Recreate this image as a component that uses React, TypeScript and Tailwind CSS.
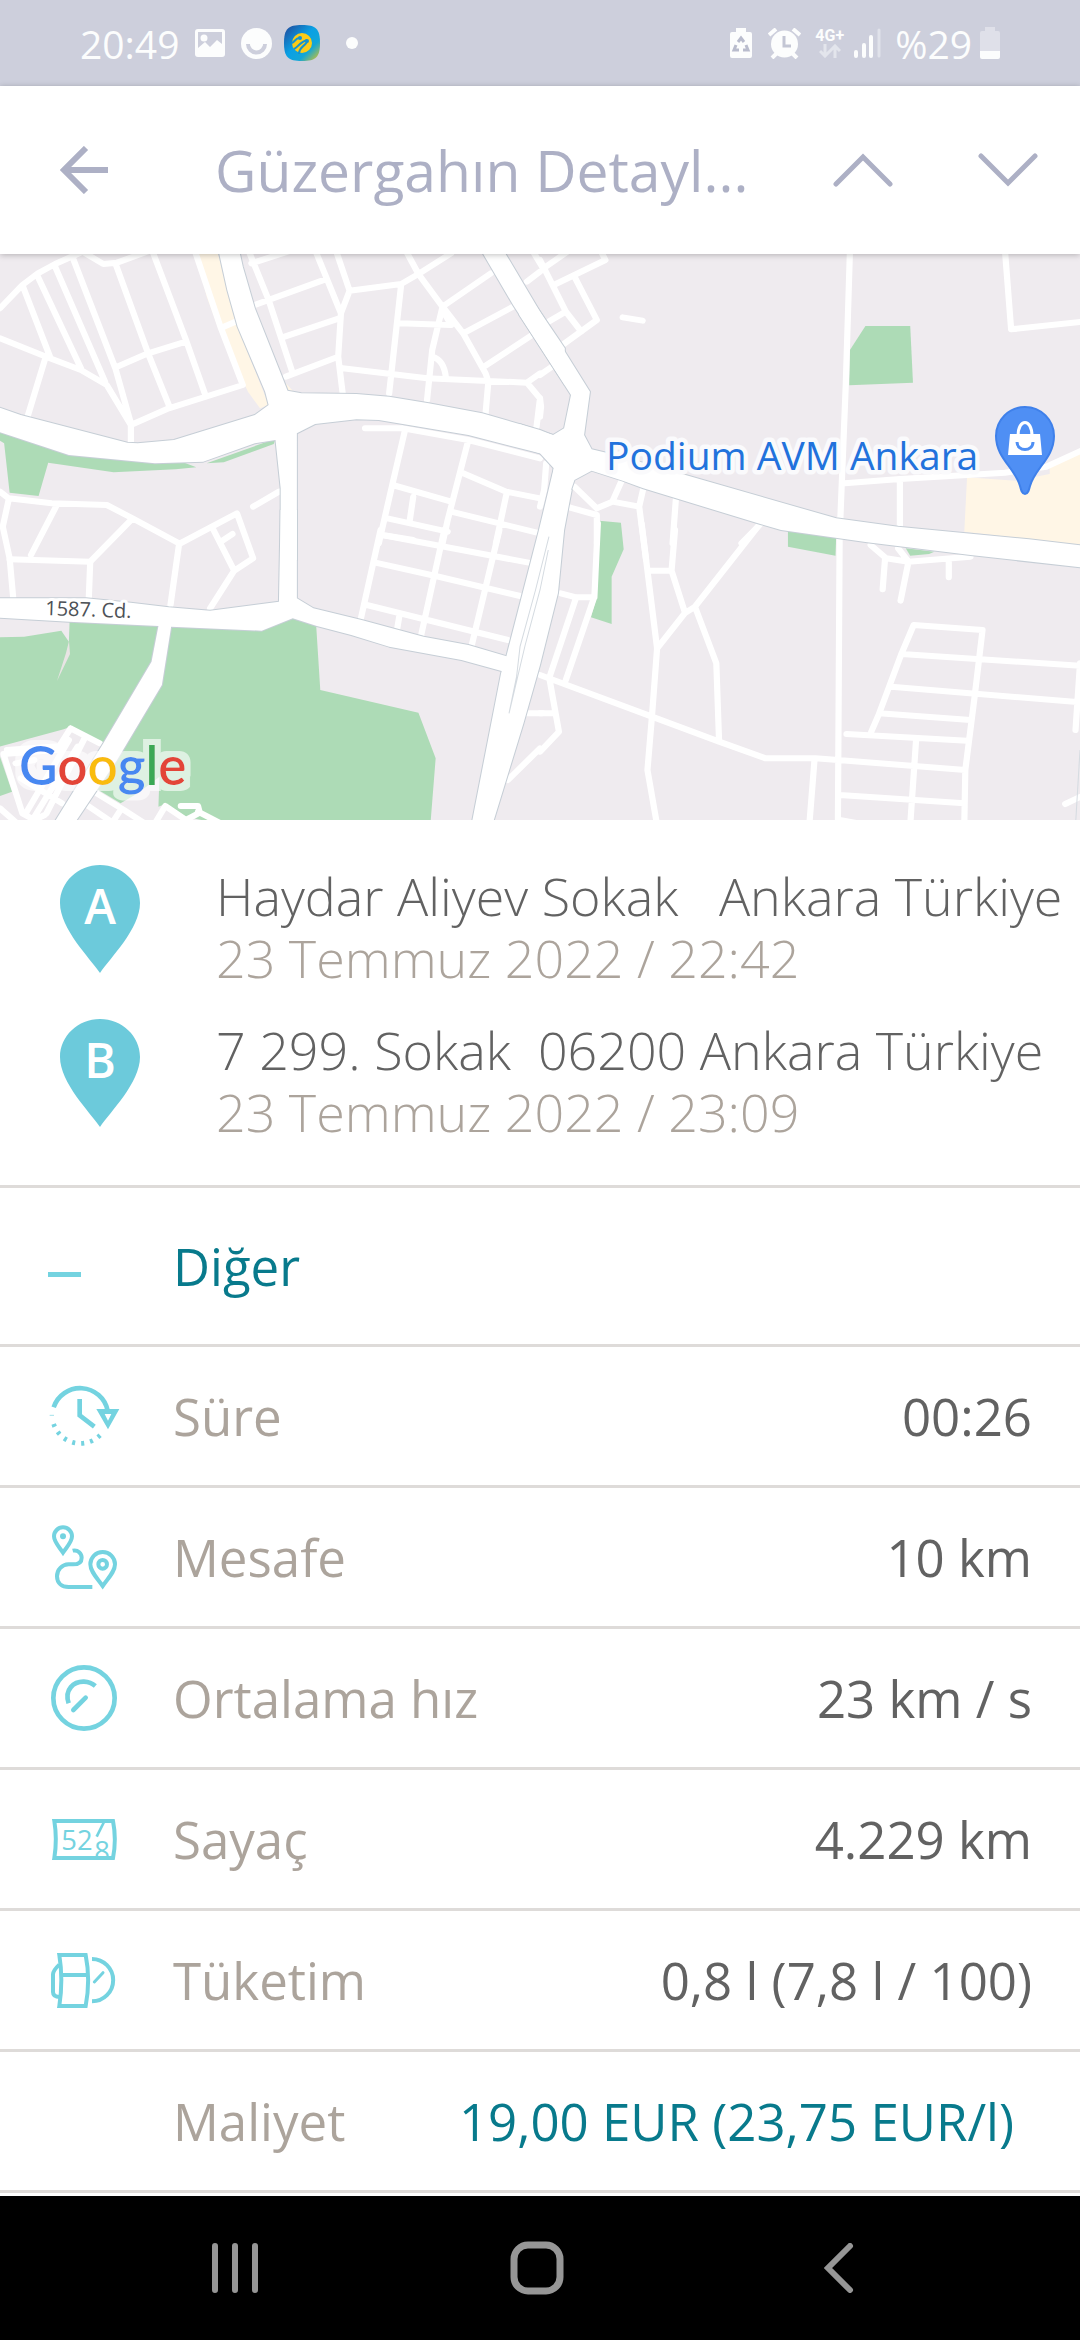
import type { ReactNode } from "react";

/* ---------- Map data: four tiles, each in its own 1568 x 870 space ---------- */

type Tile = {
  x: number;
  y: number;
  green: string[];
  yellow: string[];
  minor: string;
  major: string[];
  cuts?: string;
};

const tiles: Tile[] = [
  {
    x: 0,
    y: -4,
    green: [
      "-20,540 200,615 450,640 520,632 570,652 510,658 330,667 140,638 112,738 28,728 12,580 -20,560",
      "600,640 800,566 795,582 650,637",
    ],
    yellow: ["570,0 630,0 690,230 780,465 755,475 720,425 640,250 600,140", "830,400 850,422 830,424"],
    minor:
      "M0 175L65 105L110 70L160 42L240 5L300 42L340 38L440 0M65 105L145 320M110 80L235 355M160 50L305 395M212 25L335 355L380 520M335 40L430 310L492 470M445 10L540 270L598 440M565 0L640 230L705 405L490 475L380 525V580M340 350L430 310L540 275M650 230L690 212M0 265L145 325L235 360L310 405L380 525M130 330L80 500M725 10L780 150L850 370M730 40L850 0M740 165L945 88M915 0L990 190M975 0L1015 122L990 190L982 320L995 430M820 262L985 205M830 380L982 320M1015 122L1165 102L1215 72L1310 10M1165 102L1130 430M1180 5L1215 72L1285 170L1345 250L1410 370L1415 385M1285 170L1425 70M1285 170L1255 300L1240 450M1160 220L1310 225L1285 180M1345 250L1490 170M1405 350L1545 255M1255 320Q1290 330 1295 385M995 355L1240 385L1530 398L1568 370M1530 398L1568 445L1558 530M1418 395L1410 490M1530 95L1568 65M1545 0L1580 60M1060 535H1170L1360 570L1568 625M1175 545L1140 700L1100 880M1360 570L1300 810L1285 880M1140 705L1310 755M1345 670L1470 725L1568 745M1310 785L1568 850M1470 735L1440 880M1200 740L1190 810M1125 805L1300 845M1110 855L1200 870M0 725L25 745L150 760L310 765L385 805L520 880M25 750L8 830L28 925L38 1040M165 765L90 915M385 805L260 937M735 770L810 725M520 882L688 790L735 925L680 962L610 1075M620 840L680 962M640 876L675 852M520 882L495 1065",
    major: [
      "-20,466 60,495 370,578 400,580 505,570 740,495 780,465 770,425 690,230 660,120 630,-20 690,-20 705,50 740,175 835,422 875,430 1035,432 1130,440 1245,460 1400,490 1568,540 1640,570 1640,632 1568,610 1360,555 1100,510 1035,508 915,522 862,550 862,930 815,930 815,715 800,570 740,580 590,635 450,640 200,615 -20,540",
      "1385,-20 1490,165 1568,290 1640,405 1640,295 1568,185 1450,-20",
    ],
  },
  {
    x: 540,
    y: -4,
    green: [
      "945,228 1075,228 1083,398 898,406 900,300",
      "172,812 235,818 243,898 208,980 208,1122 148,1102 165,1040",
      "720,838 860,860 858,917 720,890",
    ],
    yellow: ["1240,682 1380,692 1480,672 1480,640 1580,600 1580,890 1420,868 1232,845"],
    minor:
      "M0 30L75 185L120 245M10 55L80 5M40 105L190 30L175 0M100 80L165 210L65 285M25 215L75 185M0 375L35 350M240 202L298 212M900 0L888 400L870 860M1350 0L1368 238L1580 215M885 700L1045 687L1350 668L1470 650L1580 598M1045 690V835M395 740L385 880M300 715L288 770L308 930M238 690L210 755M100 710L165 775L210 755L288 770M85 772L165 795V880M640 822L585 880M0 445L3 470L0 500M18 640L12 720L0 770",
    major: [
      "-60,95 0,185 145,425 128,555 150,598 220,615 400,668 860,805 1040,830 1420,868 1600,890 1600,956 1568,952 1250,915 950,877 700,840 640,822 300,715 240,692 150,662 100,690 70,780 20,780 40,655 0,610 -60,590 -60,522 0,543 38,555 70,535 90,435 0,290 -60,195",
    ],
  },
  {
    x: 0,
    y: 276,
    green: [
      "-20,322 70,320 178,302 200,335 202,275 500,288 760,302 850,262 918,285 930,480 1215,548 1265,685 1250,880 630,880 540,860 480,822 460,830 463,740 400,790 350,820 270,770 300,640 205,590 185,598 -20,655",
      "-20,660 0,680 35,785 -20,805",
    ],
    yellow: [],
    minor:
      "M28 88L262 95L258 200M205 595L290 640M205 595L165 660L10 672L65 850L100 870L130 855M248 620L135 850M75 850L200 630M45 700L100 690M100 860L225 650M20 660L180 648M60 745L180 820M0 835L55 885M265 780L360 840L420 880M245 820L330 880M325 880L350 840M450 880L480 828L540 870L580 848L575 828H525M575 845L650 885M1290 0L1222 320M1450 0L1370 345M1105 0L1048 265M1110 15L1535 98M1090 98L1265 138L1510 198M1065 225L1475 330M1160 255L1152 305M1475 750L1568 655M1525 550H1575",
    major: [
      "-20,205 250,205 380,218 490,232 610,242 810,215 815,-60 862,-60 862,205 910,235 1050,270 1230,320 1360,345 1500,388 1480,430 1340,390 1130,350 1020,315 920,288 850,265 760,302 497,290 470,465 340,690 210,890 150,890 300,640 440,395 460,288 200,275 -20,262",
      "1608,-185 1565,0 1470,380 1455,430 1368,890 1428,890 1520,580 1568,405 1620,190 1638,0 1660,-120",
    ],
    cuts: "M1594 20L1555 180L1510 350L1500 440L1478 550M1592 60L1568 180L1525 345L1478 550",
  },
  {
    x: 540,
    y: 276,
    green: ["1062,55 1145,65 1130,72 1075,77"],
    yellow: [],
    minor:
      "M168 -20L158 200L75 450M60 190L105 202H158M105 202L28 440M0 435L325 560L520 635L655 685H800L865 690L1235 720M28 450L55 605L0 665M0 550H40M295 -20L340 355L325 560L312 720L340 885M392 0L382 122L420 245M315 122H382M640 -20L450 230L420 250L340 355M450 230L512 400L520 635M870 20L865 885M797 690L782 885M960 45L1005 85L1070 95L1250 80M1040 55L1070 95L1047 212M1002 85L995 178M1187 90V142M962 605L985 550L1050 370L1085 285L1285 300L1262 500L1235 720L1232 885M1050 372L1580 408M1020 470L1580 518M985 550L1250 570M890 612L1240 632M1092 630L1075 885M870 795L1232 820M1525 822L1570 800M1568 400L1555 600M870 870L950 885",
    major: [],
    cuts: "M1568 660L1555 885",
  },
];

function Layer({ draw }: { draw: (t: Tile) => ReactNode }) {
  return (
    <>
      {tiles.map((t) => (
        <g key={`${t.x}-${t.y}`} transform={`translate(${t.x} ${t.y}) scale(0.34439 0.33333)`}>
          {draw(t)}
        </g>
      ))}
    </>
  );
}

function RouteMap() {
  return (
    <svg viewBox="0 0 1080 566" preserveAspectRatio="xMidYMid slice" className="block h-[566px] w-full bg-[#efebef]" role="img" aria-label="Harita">
      <defs>
        <filter id="halo" x="-10%" y="-30%" width="120%" height="160%">
          <feMorphology in="SourceAlpha" operator="dilate" radius="6" result="grown" />
          <feFlood floodColor="#fff" floodOpacity="0.6" />
          <feComposite in2="grown" operator="in" result="ring" />
          <feMerge>
            <feMergeNode in="ring" />
            <feMergeNode in="SourceGraphic" />
          </feMerge>
        </filter>
      </defs>

      <Layer
        draw={(t) => (
          <>
            {t.yellow.map((p) => <polygon key={p} points={p} fill="#fff6e6" />)}
            {t.green.map((p) => <polygon key={p} points={p} fill="#addbb6" />)}
          </>
        )}
      />
      <path d="M69 387L70 400L57 427L66 399Z" fill="#e8e4e4" />
      <Layer draw={(t) => <path d={t.minor} fill="none" stroke="#fff" strokeWidth="18" strokeLinejoin="round" strokeLinecap="round" />} />
      <Layer draw={(t) => t.major.map((p) => <polygon key={p} points={p} fill="none" stroke="#c6ced6" strokeWidth="6" strokeLinejoin="round" />)} />
      <Layer draw={(t) => t.major.map((p) => <polygon key={p} points={p} fill="#fff" />)} />
      <Layer draw={(t) => t.cuts && <path d={t.cuts} fill="none" stroke="#d5dbe1" strokeWidth="3" />} />

      <g fontFamily="'Open Sans', sans-serif" strokeLinejoin="round" className="[paint-order:stroke]">
        <text x="45" y="361" fontSize="20" fill="#4d5156" stroke="#fff" strokeWidth="6" transform="rotate(2 45 361)">1587. Cd.</text>
        <text x="606" y="216" fontSize="39" fill="#2272dc" stroke="#fafafc" strokeWidth="9">Podium AVM Ankara</text>
      </g>

      <path d="M1025 240C1022 240 1021 236 1020 232C1015 214 996 204 996 182A29 29 0 0 1 1054 182C1054 204 1035 214 1030 232C1029 236 1028 240 1025 240Z" fill="#4f8ff4" stroke="#3f80ea" strokeWidth="2" />
      <path d="M1010 180H1040L1042 201H1008Z" fill="#fff" />
      <path d="M1018 182C1018 164 1032 164 1032 182" fill="none" stroke="#fff" strokeWidth="3" />
      <path d="M1017 188C1017 198 1033 198 1033 188" fill="none" stroke="#4f8ff4" strokeWidth="3" />

      <text x="19" y="531" fontSize="53" fontFamily="Lato, sans-serif" fontWeight="600" filter="url(#halo)">
        <tspan fill="#4688f1">G</tspan>
        <tspan fill="#e34537">o</tspan>
        <tspan fill="#f9bc0d">o</tspan>
        <tspan fill="#4688f1">g</tspan>
        <tspan fill="#3aa955">l</tspan>
        <tspan fill="#e34537">e</tspan>
      </text>
    </svg>
  );
}

/* ---------- Status bar ---------- */

function StatusBar() {
  return (
    <div className="flex h-[86px] items-center bg-[#cdcfdc] px-20 text-[39px] leading-none text-[#fcfdfd]">
      <span>20:49</span>
      <svg viewBox="0 0 30 30" className="ml-4 h-[30px] w-[30px]">
        <path fillRule="evenodd" fill="currentColor" d="M3 1H27Q30 1 30 4V26Q30 29 27 29H3Q0 29 0 26V4Q0 1 3 1ZM3 4V20L10 14L15 19L22 12L27 16V4ZM9 6.500a3.500 3.500 0 1 1 0 7a3.500 3.500 0 0 1 0-7Z" />
      </svg>
      <svg viewBox="0 0 31 31" className="ml-4 h-[31px] w-[31px]">
        <circle cx="15.500" cy="15.500" r="15.500" fill="currentColor" />
        <path d="M7 16A8.500 8.500 0 0 0 24 16" fill="none" stroke="#cdcfdc" strokeWidth="4" />
        <path d="M9 15H22A6.500 6.500 0 0 1 9 15Z" fill="currentColor" />
      </svg>
      <svg viewBox="0 0 36 36" className="ml-3 h-9 w-9">
        <defs>
          <linearGradient id="app" x1="0" y1="0" x2="1" y2="1">
            <stop offset="0.050" stopColor="#1f4fa0" />
            <stop offset="0.450" stopColor="#0aa0e4" />
            <stop offset="0.700" stopColor="#12a6d8" />
            <stop offset="0.950" stopColor="#c8c034" />
          </linearGradient>
        </defs>
        <path d="M18 0C32 0 36 4 36 18S32 36 18 36S0 32 0 18S4 0 18 0Z" fill="url(#app)" />
        <circle cx="18" cy="18" r="10" fill="#fccb16" />
        <path d="M8 18C11 17 12 12 16 13M10 24C13 23 16 17 23 15M15 29C15 22 20 22 23 17" fill="none" stroke="#1593cf" strokeWidth="2" />
        <circle cx="16" cy="13" r="2" fill="#1593cf" />
        <circle cx="23" cy="16" r="2" fill="#1593cf" />
      </svg>
      <span className="ml-[26px] h-3 w-3 rounded-full bg-current" />

      <svg viewBox="0 0 22 30" className="ml-auto h-[30px] w-[22px]">
        <path d="M6 0H16V4H20Q22 4 22 6V28Q22 30 20 30H2Q0 30 0 28V6Q0 4 2 4H6Z" fill="currentColor" />
        <path d="M8 14L11 10L14 14M16 17L18 22H13M9 22H4L6 17" fill="none" stroke="#b9bccd" strokeWidth="3" />
      </svg>
      <svg viewBox="0 0 33 31" className="ml-4 h-[31px] w-[33px]">
        <circle cx="16.500" cy="16" r="13.500" fill="currentColor" />
        <path d="M1 7L8 1M25 1L32 7M4 30L9 25M29 30L24 25" stroke="currentColor" strokeWidth="4" />
        <path d="M16 8V18H23" fill="none" stroke="#c3c6d4" strokeWidth="3" />
      </svg>
      <span className="ml-[14px] flex flex-col items-center">
        <span className="font-['Roboto'] text-[16px] leading-[16px] font-bold">4G+</span>
        <svg viewBox="0 0 22 14" className="h-[14px] w-[22px] text-[#e3e5ec]">
          <path d="M6 0V12M1 7L6 12L11 7M16 14V2M11 7L16 2L21 7" fill="none" stroke="currentColor" strokeWidth="3" />
        </svg>
      </span>
      <svg viewBox="0 0 27 30" className="ml-[10px] h-[30px] w-[27px]">
        <path d="M2 24V28M10 17V28M17 9V28" stroke="currentColor" strokeWidth="4" strokeLinecap="round" />
        <path d="M25 2V28" stroke="#e0e2ea" strokeWidth="3" strokeLinecap="round" />
      </svg>
      <span className="ml-[14px]">%29</span>
      <svg viewBox="0 0 20 32" className="ml-2 h-8 w-5">
        <path d="M5 0H15V4H18Q20 4 20 6V24H0V6Q0 4 2 4H5Z" fill="#dfe0e9" />
        <path d="M0 24H20V30Q20 32 18 32H2Q0 32 0 30Z" fill="currentColor" />
      </svg>
    </div>
  );
}

/* ---------- Header ---------- */

function Header() {
  return (
    <header className="relative z-10 flex h-[168px] items-center bg-white pr-[42px] pl-[60px] text-[#adb0c5] shadow-[0_1px_6px_rgba(0,0,0,0.25)]">
      <button type="button" aria-label="Geri">
        <svg viewBox="0 0 48 48" className="block h-12 w-12">
          <path d="M26 2L4 24L26 46M4 24H48" fill="none" stroke="currentColor" strokeWidth="6" />
        </svg>
      </button>
      <h1 className="ml-[107px] flex-1 text-[57px] leading-none whitespace-nowrap">Güzergahın Detayl...</h1>
      <button type="button" aria-label="Önceki">
        <svg viewBox="0 0 60 34" className="block h-[34px] w-[60px]">
          <path d="M3 31L30 4L57 31" fill="none" stroke="currentColor" strokeWidth="5" strokeLinecap="round" />
        </svg>
      </button>
      <button type="button" aria-label="Sonraki" className="ml-[85px]">
        <svg viewBox="0 0 60 34" className="block h-[34px] w-[60px]">
          <path d="M3 3L30 30L57 3" fill="none" stroke="currentColor" strokeWidth="5" strokeLinecap="round" />
        </svg>
      </button>
    </header>
  );
}

/* ---------- Stops ---------- */

function Stop({ mark, address, time }: { mark: string; address: string; time: string }) {
  return (
    <li className="flex gap-[76px]">
      <svg viewBox="0 0 80 108" className="h-[108px] w-20 shrink-0">
        <path d="M40 108C30 93 0 64 0 38C0 17 18 0 40 0S80 17 80 38C80 64 50 93 40 108Z" fill="#6ccadb" />
        <text x="40" y="59" textAnchor="middle" fontSize="48" fontWeight="600" fill="#fff">{mark}</text>
      </svg>
      <div className="text-[52px] leading-[62px] font-light whitespace-pre">
        <p className="text-[#626262]">{address}</p>
        <p className="text-[#aca49c]">{time}</p>
      </div>
    </li>
  );
}

/* ---------- Detail rows ---------- */

const icons = {
  clock: (
    <svg viewBox="144 600 216 216" className="h-[72px] w-[72px]" fill="none" stroke="currentColor" strokeWidth="14">
      <path d="M161 682A84 84 0 0 1 323 692M239 657V706L283 740" />
      <path d="M161 732A84 84 0 0 0 301 765" strokeDasharray="9 18" />
      <path d="M149 706H162" strokeWidth="2" />
      <path d="M289 687H358L324 748ZM314 702L324 722L334 702Z" fill="currentColor" fillRule="evenodd" stroke="none" />
    </svg>
  ),
  route: (
    <svg viewBox="144 1023 216 216" className="h-[72px] w-[72px]" fill="none" stroke="currentColor" strokeWidth="12">
      <path d="M189 1118C177 1100 162 1086 162 1069A27 27 0 0 1 216 1069C216 1086 201 1100 189 1118Z" />
      <circle cx="189" cy="1069" r="9" fill="currentColor" stroke="none" />
      <path d="M308 1218C292 1195 271 1175 271 1153A37 37 0 0 1 345 1153C345 1175 324 1195 308 1218Z" />
      <circle cx="308" cy="1153" r="13" />
      <path d="M218 1112C234 1108 245 1121 245 1133C245 1148 234 1153 219 1153H206C186 1154 171 1168 171 1189C171 1210 186 1221 206 1221H277" />
    </svg>
  ),
  speed: (
    <svg viewBox="144 66 216 216" className="h-[72px] w-[72px]" fill="none" stroke="currentColor" strokeWidth="14">
      <circle cx="252" cy="174" r="92" />
      <path d="M206 190C192 148 222 124 252 125Q272 126 286 138" />
      <path d="M220 210L257 173" strokeLinecap="round" />
    </svg>
  ),
  odometer: (
    <svg viewBox="144 489 216 216" className="h-[72px] w-[72px]" fill="none" stroke="currentColor" strokeWidth="12">
      <clipPath id="dial">
        <path d="M150 540H350V650H150Z" />
      </clipPath>
      <path d="M163 543H339Q350 598 339 654H163Q172 598 163 543Z" />
      <g fill="currentColor" stroke="none" fontSize="82" clipPath="url(#dial)">
        <text x="184" y="629">52</text>
        <text x="283" y="662">8</text>
      </g>
      <path d="M312 546L290 590" strokeWidth="8" />
    </svg>
  ),
  fuel: (
    <svg viewBox="144 912 216 216" className="h-[72px] w-[72px]" fill="none" stroke="currentColor" strokeWidth="12">
      <path d="M178 945H257Q272 1020 257 1098H178Q190 1020 178 945ZM183 1005H264" />
      <path d="M178 974Q159 992 159 1003V1056Q159 1071 180 1071" />
      <path d="M276 957A63 63 0 0 1 276 1084" />
      <path d="M283 1026L309 998" strokeWidth="9" strokeLinecap="round" />
    </svg>
  ),
};

const rows: { icon?: ReactNode; label: string; value: string }[] = [
  { icon: icons.clock, label: "Süre", value: "00:26" },
  { icon: icons.route, label: "Mesafe", value: "10 km" },
  { icon: icons.speed, label: "Ortalama hız", value: "23 km / s" },
  { icon: icons.odometer, label: "Sayaç", value: "4.229 km" },
  { icon: icons.fuel, label: "Tüketim", value: "0,8 l (7,8 l / 100)" },
];

function Details() {
  return (
    <section className="text-[51px] leading-none">
      <button type="button" className="flex h-[162px] w-full items-center border-y-3 border-[#dedbd9] pl-12 text-left text-[#087a8c]">
        <span className="mt-4 h-[5px] w-[33px] bg-[#74d3e0]" />
        <span className="ml-[92px]">Diğer</span>
      </button>
      <dl>
        {rows.map((r) => (
          <div key={r.label} className="flex h-[141px] items-center border-b-3 border-[#dedbd9] px-12">
            <dt className="flex items-center gap-[53px] text-[#aca49c]">
              <span className="text-[#74d3e0]" aria-hidden="true">{r.icon}</span>
              {r.label}
            </dt>
            <dd className="ml-auto text-[#626262]">{r.value}</dd>
          </div>
        ))}
        <div className="flex h-[141px] items-center border-b-3 border-[#dedbd9] pr-[66px] pl-[173px]">
          <dt className="text-[#aca49c]">Maliyet</dt>
          <dd className="ml-auto text-[#087a8c]">
            <button type="button">19,00 EUR (23,75 EUR/l)</button>
          </dd>
        </div>
      </dl>
    </section>
  );
}

/* ---------- System navigation ---------- */

function NavBar() {
  return (
    <nav className="mt-[3px] grid h-36 grid-cols-3 items-center justify-items-center bg-black pr-[90px] pl-[84px] text-[#969696]">
      <button type="button" aria-label="Son uygulamalar">
        <svg viewBox="0 0 46 50" className="block h-[50px] w-[46px]">
          <path d="M3 3V47M23 3V47M43 3V47" stroke="currentColor" strokeWidth="6" strokeLinecap="round" />
        </svg>
      </button>
      <button type="button" aria-label="Ana ekran">
        <svg viewBox="0 0 54 54" className="block h-[54px] w-[54px]">
          <rect x="4" y="4" width="46" height="46" rx="14" fill="none" stroke="currentColor" strokeWidth="7" />
        </svg>
      </button>
      <button type="button" aria-label="Geri">
        <svg viewBox="0 0 30 50" className="block h-[50px] w-[30px]">
          <path d="M26 3L4 25L26 47" fill="none" stroke="currentColor" strokeWidth="6" strokeLinecap="round" />
        </svg>
      </button>
    </nav>
  );
}

export default function App() {
  return (
    <div className="min-h-screen overflow-x-hidden bg-white font-['Open_Sans',sans-serif]" lang="tr">
      <StatusBar />
      <Header />
      <RouteMap />
      <ul className="flex flex-col gap-[30px] pt-[45px] pb-[42px] pl-[60px]">
        <Stop mark="A" address="Haydar Aliyev Sokak   Ankara Türkiye" time="23 Temmuz 2022 / 22:42" />
        <Stop mark="B" address="7 299. Sokak  06200 Ankara Türkiye" time="23 Temmuz 2022 / 23:09" />
      </ul>
      <Details />
      <NavBar />
    </div>
  );
}
